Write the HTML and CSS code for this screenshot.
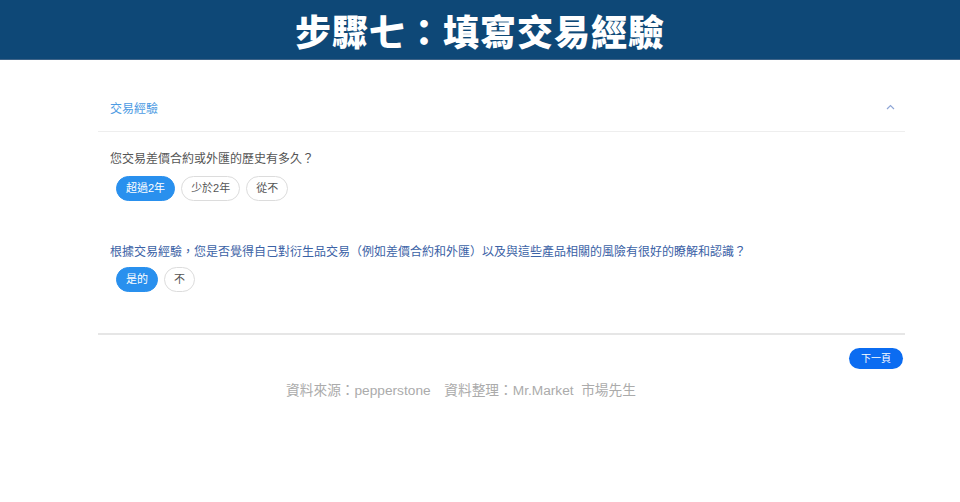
FILE: index.html
```html
<!DOCTYPE html>
<html>
<head>
	<title>步驟七：填寫交易經驗</title>
	<meta charset="utf-8">
	<link rel="stylesheet" href="styles.css">
</head>
<body>
<div class="banner">
	<h1>步驟七：填寫交易經驗</h1>
</div>

<div class="wrap">
	<div class="panel-head">
		<span>交易經驗</span>
		<svg class="arrow" width="9" height="6" viewBox="0 0 9 6"><polyline points="1,5 4.5,1.5 8,5" fill="none" stroke="#8fa6d6" stroke-width="1.2"/></svg>
	</div>

	<div class="question">
		<p class="q">您交易差價合約或外匯的歷史有多久？</p>
		<div class="opts">
			<span class="opt on">超過2年</span>
			<span class="opt">少於2年</span>
			<span class="opt">從不</span>
		</div>
	</div>

	<div class="question second">
		<p class="q blue">根據交易經驗，您是否覺得自己對衍生品交易（例如差價合約和外匯）以及與這些產品相關的風險有很好的瞭解和認識？</p>
		<div class="opts">
			<span class="opt on">是的</span>
			<span class="opt">不</span>
		</div>
	</div>

	<div class="foot">
		<span class="next">下一頁</span>
	</div>
</div>

<p class="source">資料來源：pepperstone　資料整理：Mr.Market&nbsp; 市場先生</p>
</body>
</html>
```

FILE: styles.css
```css
body{
	margin: 0;
	font-family: "Liberation Sans", "Noto Sans CJK TC", sans-serif;
	background: #fff;
}
.banner{
	height: 59px;
	background-color: #0e4877;
	border-bottom: 1px solid #3f6488;
	display: flex;
	align-items: center;
	justify-content: center;
}
.banner h1{
	margin: 0;
	color: #fff;
	font-size: 36px;
	font-weight: 900;
	font-family: "Noto Sans CJK TC", sans-serif;
	letter-spacing: 1px;
}
.wrap{
	width: 807px;
	margin: 24px 0 0 98px;
}
.panel-head{
	height: 47px;
	border-bottom: 1px solid #eeeeee;
	display: flex;
	align-items: center;
	justify-content: space-between;
	padding: 0 10px 0 12px;
	font-size: 12px;
	color: #4d9be3;
}
.arrow{
	margin-top: -2px;
}
.question{
	padding-left: 12px;
	margin-top: 18px;
}
.question.second{
	margin-top: 42px;
}
.q{
	margin: 0;
	font-size: 12px;
	line-height: 18px;
	color: #555;
}
.q.blue{
	color: #3b62a6;
}
.opts{
	display: flex;
	gap: 6px;
	margin-top: 8px;
	padding-left: 6px;
}
.second .opts{
	margin-top: 6px;
}
.opt{
	height: 25px;
	line-height: 23px;
	padding: 0 9px;
	border: 1px solid #dcdcdc;
	border-radius: 13px;
	font-size: 11px;
	color: #555;
	box-sizing: border-box;
}
.opt.on{
	background-color: #2990ee;
	border-color: #2990ee;
	color: #fff;
}
.foot{
	margin-top: 41px;
	border-top: 2px solid #e6e6e6;
	display: flex;
	justify-content: flex-end;
	padding: 13px 2px 0 0;
}
.next{
	height: 21px;
	line-height: 21px;
	padding: 0 12px;
	border-radius: 11px;
	background-color: #0b6cf1;
	color: #fff;
	font-size: 10px;
}
.source{
	margin: 12px 0 0;
	width: 922px;
	text-align: center;
	font-size: 13.7px;
	line-height: 20px;
	color: #ababab;
}
```
